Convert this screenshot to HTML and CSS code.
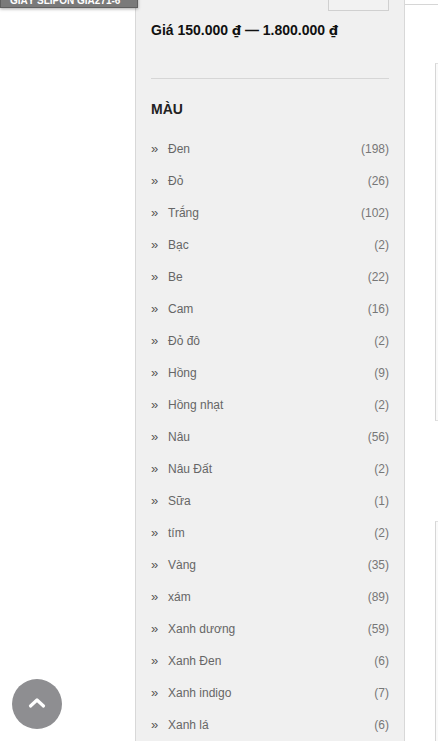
FILE: index.html
```html
<!DOCTYPE html>
<html lang="vi">
<head>
<meta charset="utf-8">
<title>Lọc sản phẩm</title>
<link rel="stylesheet" href="styles.css">
</head>
<body>
<div class="page">
  <div class="left-col"></div>
  <aside class="sidebar">
    <div class="filter-btn"></div>
    <div class="price">Giá 150.000 <span class="cur">₫</span> — 1.800.000 <span class="cur">₫</span></div>
    <hr class="sep">
    <h3 class="widget-title">MÀU</h3>
    <ul class="colors">
      <li><span class="chev">»</span><span class="name">Đen</span><span class="count">(198)</span></li>
      <li><span class="chev">»</span><span class="name">Đỏ</span><span class="count">(26)</span></li>
      <li><span class="chev">»</span><span class="name">Trắng</span><span class="count">(102)</span></li>
      <li><span class="chev">»</span><span class="name">Bạc</span><span class="count">(2)</span></li>
      <li><span class="chev">»</span><span class="name">Be</span><span class="count">(22)</span></li>
      <li><span class="chev">»</span><span class="name">Cam</span><span class="count">(16)</span></li>
      <li><span class="chev">»</span><span class="name">Đỏ đô</span><span class="count">(2)</span></li>
      <li><span class="chev">»</span><span class="name">Hồng</span><span class="count">(9)</span></li>
      <li><span class="chev">»</span><span class="name">Hồng nhạt</span><span class="count">(2)</span></li>
      <li><span class="chev">»</span><span class="name">Nâu</span><span class="count">(56)</span></li>
      <li><span class="chev">»</span><span class="name">Nâu Đất</span><span class="count">(2)</span></li>
      <li><span class="chev">»</span><span class="name">Sữa</span><span class="count">(1)</span></li>
      <li><span class="chev">»</span><span class="name">tím</span><span class="count">(2)</span></li>
      <li><span class="chev">»</span><span class="name">Vàng</span><span class="count">(35)</span></li>
      <li><span class="chev">»</span><span class="name">xám</span><span class="count">(89)</span></li>
      <li><span class="chev">»</span><span class="name">Xanh dương</span><span class="count">(59)</span></li>
      <li><span class="chev">»</span><span class="name">Xanh Đen</span><span class="count">(6)</span></li>
      <li><span class="chev">»</span><span class="name">Xanh indigo</span><span class="count">(7)</span></li>
      <li><span class="chev">»</span><span class="name">Xanh lá</span><span class="count">(6)</span></li>
    </ul>
  </aside>
  <main class="content">
    <div class="card card-one"></div>
    <div class="card card-two"></div>
  </main>
</div>
<div class="badge">GIẤY SLIPON GIA271-6</div>
<a class="to-top" href="#">
  <svg width="20" height="12" viewBox="0 0 20 12"><path d="M3.5 9 L10 3 L16.5 9" fill="none" stroke="#fff" stroke-width="3.2" stroke-linecap="round" stroke-linejoin="round"/></svg>
</a>
</body>
</html>
```

FILE: styles.css
```css
html, body {
  margin: 0;
  padding: 0;
  background: #fff;
  font-family: "Liberation Sans", Arial, Helvetica, sans-serif;
  height: 741px;
  overflow: hidden;
}
.page {
  display: flex;
  align-items: flex-start;
  height: 741px;
}
.left-col {
  width: 135px;
  flex: none;
}
.sidebar {
  width: 238px;
  flex: none;
  padding: 0 15px;
  background: #f0f0f0;
  border-left: 1px solid #d8d8d8;
  border-right: 1px solid #d8d8d8;
  height: 741px;
}
.filter-btn {
  width: 61px;
  height: 11px;
  margin-left: auto;
  box-sizing: border-box;
  border: 1px solid #d0d0d0;
  border-top: none;
  background: #f2f2f2;
}
.price {
  margin-top: 9px;
  height: 20px;
  font-size: 14px;
  line-height: 20px;
  font-weight: bold;
  color: #111;
}
.cur {
  font-family: "DejaVu Sans", sans-serif;
  font-size: 13px;
  line-height: 1;
}
.sep {
  margin: 38px 0 0;
  border: none;
  border-top: 1px solid #d6d6d6;
  height: 0;
}
.widget-title {
  margin: 20px 0 0;
  font-size: 14px;
  line-height: 20px;
  font-weight: bold;
  color: #222;
}
.colors {
  list-style: none;
  margin: 14px 0 0;
  padding: 0;
}
.colors li {
  display: flex;
  align-items: center;
  height: 32px;
  font-size: 12px;
  color: #666;
}
.chev {
  width: 17px;
  flex: none;
  color: #555;
  font-size: 13px;
  position: relative;
  top: -1px;
}
.name {
  flex: 1;
}
.count {
  color: #777;
}
.content {
  flex: 1;
  margin-top: 4px;
  border-top: 1px solid #d6d6d6;
  padding-left: 30px;
  height: 736px;
}
.card {
  background: #fafafa;
  border-left: 1px solid #d6d6d6;
  border-top: 1px solid #e0e0e0;
  border-bottom: 1px solid #e0e0e0;
}
.card-one {
  margin-top: 58px;
  height: 356px;
}
.card-two {
  margin-top: 100px;
  height: 240px;
}
.badge {
  position: absolute;
  left: 0;
  top: -6px;
  width: 120px;
  padding: 0 7px 0 9px;
  height: 12px;
  line-height: 12px;
  background: #7a7a7a;
  border: 1px solid #5f5f5f;
  color: #fff;
  font-size: 10px;
  font-weight: bold;
  white-space: nowrap;
  overflow: hidden;
  box-shadow: 0 1px 3px rgba(0,0,0,0.35);
}
.to-top {
  position: fixed;
  left: 12px;
  bottom: 12px;
  width: 50px;
  height: 50px;
  border-radius: 50%;
  background: #8e8e91;
  display: flex;
  align-items: center;
  justify-content: center;
}
.to-top svg {
  position: relative;
  top: -1px;
}
```
